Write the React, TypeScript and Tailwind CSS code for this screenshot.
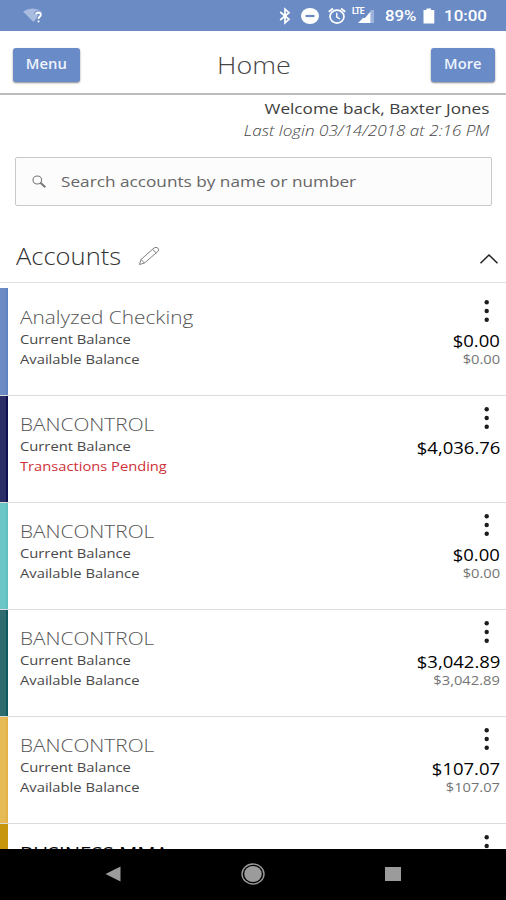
import React from "react";

type Account = {
  name: string;
  color: string;
  edge: string;
  balance: string;
  available?: string;
};

const accounts: Account[] = [
  { name: "Analyzed Checking", color: "bg-[#6c8ac4]", edge: "border-[#5f82c0]", balance: "$0.00", available: "$0.00" },
  { name: "BANCONTROL", color: "bg-[#2b2d66]", edge: "border-[#0f1150]", balance: "$4,036.76" },
  { name: "BANCONTROL", color: "bg-[#6cc5c6]", edge: "border-[#62c0c1]", balance: "$0.00", available: "$0.00" },
  { name: "BANCONTROL", color: "bg-[#2f6c70]", edge: "border-[#0e5a5e]", balance: "$3,042.89", available: "$3,042.89" },
  { name: "BANCONTROL", color: "bg-[#e6ba54]", edge: "border-[#e3b347]", balance: "$107.07", available: "$107.07" },
];

function Dots() {
  return (
    <svg width="8" height="24" viewBox="0 0 8 24" fill="#1c1c1c" className="mr-[9px] block">
      <circle cx="3.7" cy="3.3" r="2.2" />
      <circle cx="3.7" cy="12" r="2.2" />
      <circle cx="3.7" cy="20.7" r="2.2" />
    </svg>
  );
}

function Row({ a, first }: { a: Account; first: boolean }) {
  return (
    <div className={`flex shrink-0 border-b border-[#dcdcdc] ${first ? "h-[108px]" : "h-[107px]"}`}>
      <div className={`w-2 shrink-0 border-r-2 ${a.color} ${a.edge}`} />
      <div className={`flex flex-1 justify-between pl-3 pr-1.5 ${first ? "pt-px" : ""}`}>
        <div className="flex flex-col items-start whitespace-nowrap pt-4">
          <div className="h-6 origin-left scale-x-[1.095] text-[19px] font-light leading-[25px] text-[#555]">{a.name}</div>
          <div className="h-5 origin-left scale-x-[1.135] text-[13px] leading-5 text-[#484848]">Current Balance</div>
          {a.available ? (
            <div className="h-5 origin-left scale-x-[1.135] text-[13px] leading-5 text-[#484848]">Available Balance</div>
          ) : (
            <div className="h-5 origin-left scale-x-[1.13] text-[13px] leading-5 text-[#cf3038]">Transactions Pending</div>
          )}
        </div>
        <div className="flex flex-col items-end whitespace-nowrap pt-2.5">
          <Dots />
          <div className="mt-[9px] h-[18px] origin-right scale-x-[1.155] text-[16px] font-medium leading-[19px] text-black">{a.balance}</div>
          {a.available && (
            <div className="h-[18px] origin-right scale-x-[1.13] text-[13px] leading-[18px] text-[#747474]">{a.available}</div>
          )}
        </div>
      </div>
    </div>
  );
}

function StatusBar() {
  return (
    <div className="flex h-[31px] shrink-0 items-center justify-between bg-[#6b8bc5] pl-[23px] pr-[18px] text-white">
      <svg width="22" height="16" viewBox="0 0 22 16">
        <path d="M0 3.5 Q9.5 -2.5 19 3.5 L10.5 14 Z" fill="#a9bce0" />
        <path d="M13 6.5 Q13.2 4.5 15.5 4.5 Q17.8 4.6 17.8 6.7 Q17.8 8 16.4 8.9 Q15.5 9.5 15.5 11 M15.5 12.4 V14.2" fill="none" stroke="#6b8bc5" strokeWidth="4" />
        <path d="M13 6.5 Q13.2 4.5 15.5 4.5 Q17.8 4.6 17.8 6.7 Q17.8 8 16.4 8.9 Q15.5 9.5 15.5 11 M15.5 12.4 V14.2" fill="none" stroke="#fff" strokeWidth="1.9" />
      </svg>
      <div className="flex items-center pt-px font-[Roboto,sans-serif] text-[15px] font-medium">
        <svg width="12" height="18" viewBox="0 0 12 18" fill="none" stroke="#fff" strokeWidth="1.7">
          <path d="M1.2 5 L10 12.3 L6 15.8 V2.2 L10 5.7 L1.2 13" />
        </svg>
        <svg width="18" height="18" viewBox="0 0 18 18" className="ml-[10px]">
          <ellipse cx="9" cy="9" rx="9" ry="8" fill="#fff" />
          <path d="M4.5 9 H13.5" stroke="#6b8bc5" strokeWidth="2.2" />
        </svg>
        <svg width="18" height="18" viewBox="0 0 18 18" className="ml-[9px]" fill="none" stroke="#fff" strokeWidth="1.7">
          <ellipse cx="9" cy="9.6" rx="7" ry="6.5" />
          <path d="M8.8 5.8 V10 L12 12" strokeWidth="1.4" />
          <path d="M0.8 4.8 L5 1.6 M17.2 4.8 L13 1.6" strokeWidth="1.9" />
        </svg>
        <div className="ml-[6px] flex h-[18px] w-[22px]">
          <span className="h-2 w-[12px] shrink-0 text-[9px] font-bold leading-[9px] tracking-[-0.7px]">
            <span className="inline-block origin-left scale-x-[0.95]">LTE</span>
          </span>
          <svg width="18" height="15" viewBox="0 0 18 15" className="-ml-[7px] mt-px shrink-0">
            <path d="M13.5 2 H17 V15 H13.5 Z" fill="#9db3dc" />
            <path d="M13.5 3.5 V15 H1 L6 10 H8 Z" fill="#fff" />
          </svg>
        </div>
        <span className="ml-[11px] w-[32px] whitespace-nowrap"><span className="inline-block origin-left scale-x-[1.12]">89%</span></span>
        <svg width="12" height="16" viewBox="0 0 12 16" className="ml-[6px]">
          <path d="M3.5 0.5 H8 V2 H11.3 V15.5 H0.5 V2 H3.5 Z" fill="#fff" />
        </svg>
        <span className="ml-[9px] w-[44px] whitespace-nowrap"><span className="inline-block origin-left scale-x-[1.13]">10:00</span></span>
      </div>
    </div>
  );
}

export default function App() {
  return (
    <div className="flex h-[900px] w-[506px] flex-col overflow-hidden bg-white font-['Open_Sans',sans-serif]">
      <StatusBar />
      <header className="flex h-16 shrink-0 items-start justify-between border-b-2 border-[#bdbdbd] pl-[13px] pr-[11px] pt-[17px]">
        <button className="flex h-[34px] w-[67px] items-center justify-center rounded-[3px] bg-[#698bc7] pb-[3px] text-[14px] font-semibold text-[#eef3fd] shadow-[0_1px_2px_#0007]">
          <span className="scale-x-[1.06]">Menu</span>
        </button>
        <h1 className="-ml-[4px] -mt-px scale-x-[1.12] text-[24px] font-light leading-9 text-[#444]">Home</h1>
        <button className="flex h-[34px] w-[64px] items-center justify-center rounded-[3px] bg-[#698bc7] pb-[3px] text-[14px] font-semibold text-[#eef3fd] shadow-[0_1px_2px_#0007]">
          <span className="scale-x-[1.05]">More</span>
        </button>
      </header>

      <div className="flex h-[62px] shrink-0 flex-col items-end whitespace-nowrap pr-[17px] pt-[2px]">
        <div className="origin-right scale-x-[1.145] text-[15px] leading-[22px] text-[#404040]">Welcome back, Baxter Jones</div>
        <div className="origin-right scale-x-[1.14] text-[15px] font-light italic leading-[22px] text-[#444]">Last login 03/14/2018 at 2:16 PM</div>
      </div>

      <div className="ml-[15px] flex h-[49px] w-[477px] shrink-0 items-center rounded-[2px] border border-[#c9c9c9] bg-[#fcfcfc] pl-4">
        <svg width="15" height="14" viewBox="0 0 15 14" fill="none" stroke="#777">
          <ellipse cx="5.3" cy="5" rx="4.3" ry="4" strokeWidth="1.1" />
          <path d="M8.5 7.8 L13.3 12.3" strokeWidth="2" />
        </svg>
        <span className="ml-[14px] origin-left scale-x-[1.147] whitespace-nowrap pb-[2px] text-[15px] leading-6 text-[#666]">Search accounts by name or number</span>
      </div>

      <div className="flex h-[77px] shrink-0 items-start border-b border-[#e2e2e2] pl-4 pr-[7px] pt-[35px]">
        <h2 className="w-[105px] whitespace-nowrap text-[23px] font-light leading-[30px] text-[#333]"><span className="inline-block origin-left scale-x-[1.11]">Accounts</span></h2>
        <svg width="22" height="20" viewBox="0 0 22 20" className="ml-[17px] mt-[5px]" fill="none" stroke="#808080" strokeWidth="1">
          <path d="M1.5 18.5 L3 13.5 L16 2 Q18 0.5 20 2.2 Q21.5 4 19.8 5.5 L6.5 17 Z M14.5 3.5 L18.3 6.8 M3 13.5 L6.5 17" />
        </svg>
        <svg width="20" height="12" viewBox="0 0 20 12" className="ml-auto mt-[12px]" fill="none" stroke="#222" strokeWidth="1.5">
          <path d="M1.5 10.3 L10 2 L18.5 10.3" />
        </svg>
      </div>

      <main className="flex h-[566px] shrink-0 flex-col overflow-hidden pt-[5px]">
        {accounts.map((a, i) => (
          <Row key={i} a={a} first={i === 0} />
        ))}
        <div className="flex h-[107px] shrink-0">
          <div className="w-2 shrink-0 bg-[#c8960c]" />
          <div className="flex flex-1 justify-between pl-3 pr-1.5">
            <div className="pt-[17px]">
              <div className="origin-left scale-x-[1.07] whitespace-nowrap text-[19px] leading-6 text-black">BUSINESS MMA</div>
            </div>
            <div className="pt-2.5"><Dots /></div>
          </div>
        </div>
      </main>

      <nav className="flex h-[51px] shrink-0 items-center justify-between bg-black pb-px pl-[105px] pr-[105px]">
        <svg width="16" height="16" viewBox="0 0 16 16"><path d="M15.5 0.5 V15.5 L0.5 8 Z" fill="#9b9b9b" /></svg>
        <svg width="24" height="22" viewBox="0 0 24 22">
          <ellipse cx="12" cy="11" rx="11" ry="10" fill="none" stroke="#9b9b9b" strokeWidth="1.4" />
          <ellipse cx="12" cy="11" rx="8.8" ry="8" fill="#9b9b9b" />
        </svg>
        <div className="h-[14px] w-4 bg-[#9b9b9b]" />
      </nav>
    </div>
  );
}
